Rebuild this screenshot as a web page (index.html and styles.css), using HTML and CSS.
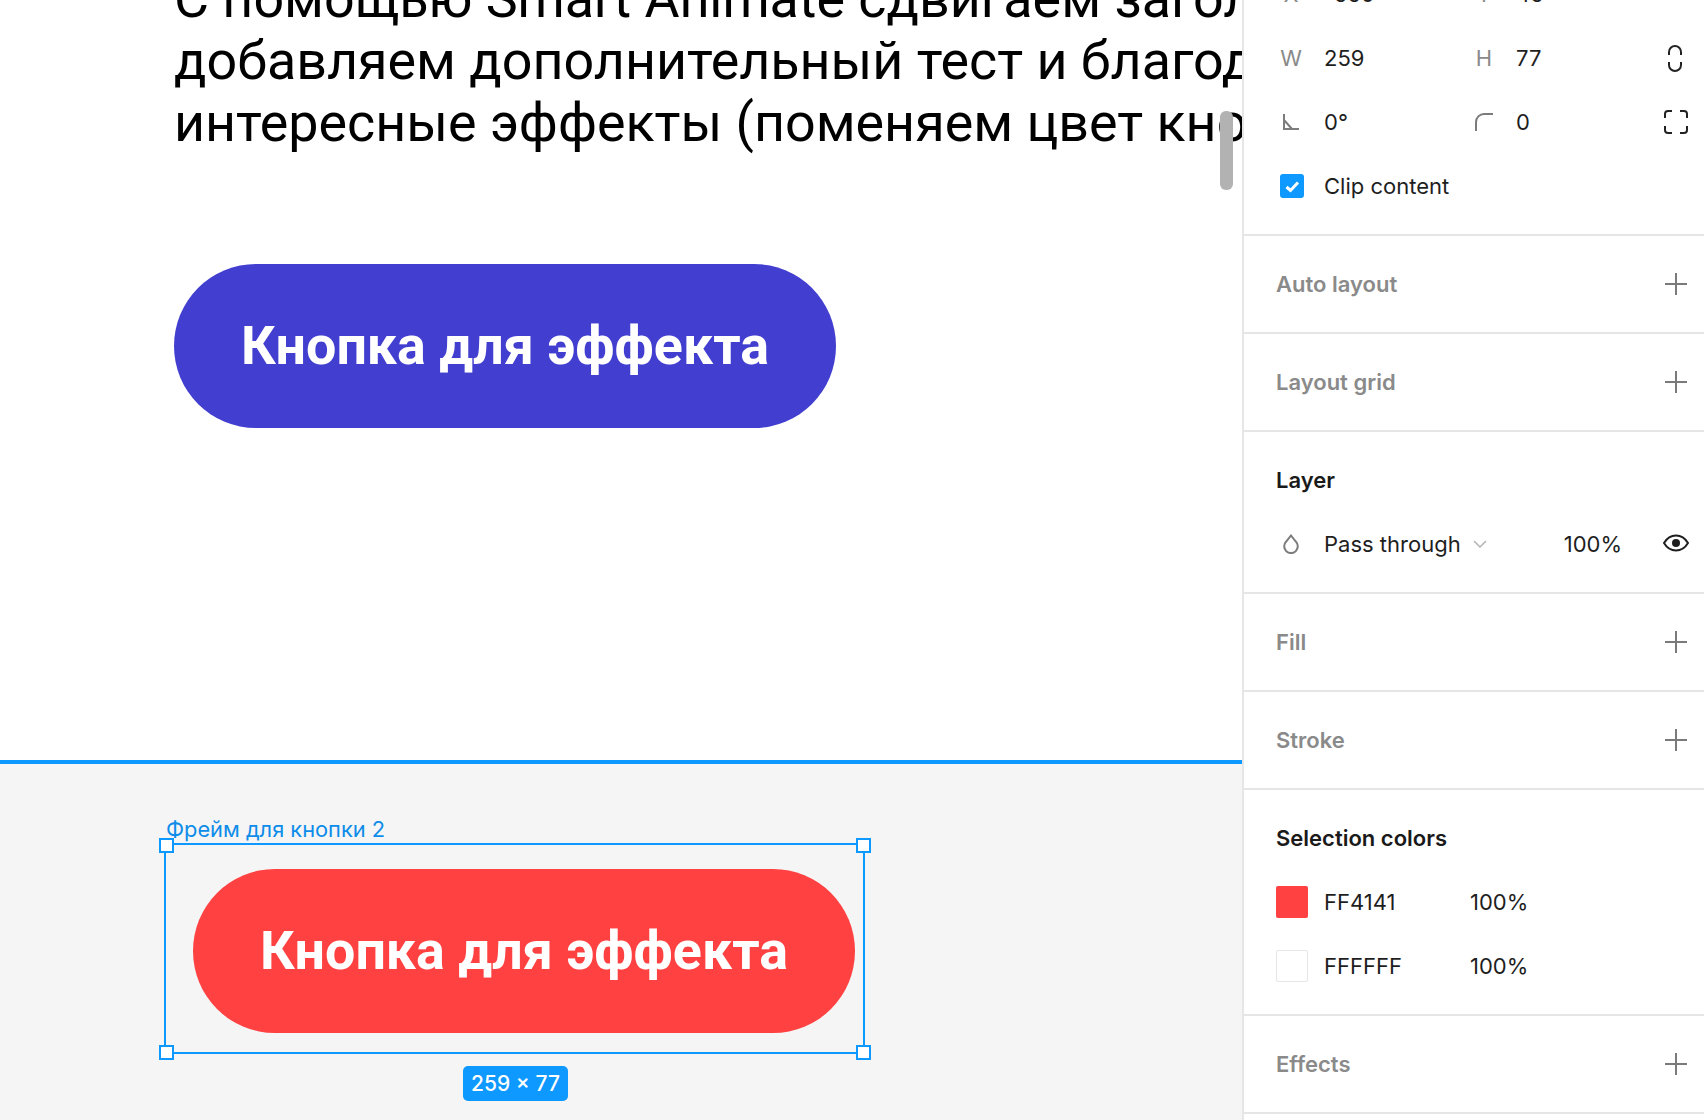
FILE: index.html
```html
<!DOCTYPE html>
<html lang="en">
<head>
    <meta charset="UTF-8">
    <meta name="viewport" content="width=device-width, initial-scale=1.0">
    <title>Smart Animate</title>
    <link rel="stylesheet" href="styles.css">
</head>
<body>

<div class="app">
    <div class="canvas">
        <div class="artboard">
            <p class="lead">
                <span>С помощью Smart Animate сдвигаем заголовок,</span>
                <span>добавляем дополнительный тест и благодаря этому</span>
                <span>интересные эффекты (поменяем цвет кнопки)</span>
            </p>
            <div class="btn btn-blue">Кнопка для эффекта</div>
        </div>
        <div class="workspace">
            <div class="frame-label">Фрейм для кнопки 2</div>
            <div class="frame">
                <i class="handle tl"></i><i class="handle tr"></i>
                <i class="handle bl"></i><i class="handle br"></i>
                <div class="btn btn-red">Кнопка для эффекта</div>
            </div>
            <div class="size-badge">259 × 77</div>
        </div>
        <div class="scrollbar"></div>
    </div>

    <!-- Right panel -->
    <aside class="panel">
        <section class="sec sec-frame">
            <div class="row">
                <span class="key">X</span><span class="val val-a">-550</span>
                <span class="key">Y</span><span class="val">45</span>
            </div>
            <div class="row">
                <span class="key">W</span><span class="val val-a">259</span>
                <span class="key">H</span><span class="val">77</span>
                <svg class="tool tool-link" viewBox="0 0 14 27"><path d="M1 10V7a6 6 0 0 1 12 0v3M1 17v3a6 6 0 0 0 12 0v-3"/></svg>
            </div>
            <div class="row">
                <span class="key"><svg class="ico ico-angle" viewBox="0 0 16 16"><path d="M1 0v15h15M1 6l8 9"/></svg></span><span class="val val-a">0°</span>
                <span class="key"><svg class="ico ico-corner" viewBox="0 0 18 18"><path d="M1 18V9a8 8 0 0 1 8-8h9"/></svg></span><span class="val">0</span>
                <svg class="tool tool-expand" viewBox="0 0 24 24"><path d="M1 8V4a3 3 0 0 1 3-3h4M16 1h4a3 3 0 0 1 3 3v4M23 16v4a3 3 0 0 1-3 3h-4M8 23H4a3 3 0 0 1-3-3v-4"/></svg>
            </div>
            <div class="row">
                <span class="check"><svg viewBox="0 0 24 24"><path d="M6.500 13l4 3.500 7.500-8"/></svg></span>
                <span class="val">Clip content</span>
            </div>
        </section>

        <section class="sec sec-empty">
            <h3>Auto layout</h3>
            <svg class="plus" viewBox="0 0 22 22"><path d="M11 0v22M0 11h22"/></svg>
        </section>
        <section class="sec sec-empty">
            <h3>Layout grid</h3>
            <svg class="plus" viewBox="0 0 22 22"><path d="M11 0v22M0 11h22"/></svg>
        </section>

        <section class="sec sec-layer">
            <h3 class="dark">Layer</h3>
            <div class="row">
                <span class="key"><svg class="ico ico-drop" viewBox="0 0 16 20"><path d="M8 1.500l4.800 6a6.800 6.800 0 1 1-9.600 0z"/></svg></span>
                <span class="val">Pass through</span>
                <svg class="chev" viewBox="0 0 14 10"><path d="M1 2l6 6 6-6"/></svg>
                <span class="val pct">100%</span>
                <svg class="eye" viewBox="0 0 26 18"><path d="M1 9c3-5 7-7.500 12-7.500S22 4 25 9c-3 5-7 7.500-12 7.500S4 14 1 9z"/><circle cx="13" cy="9" r="4"/></svg>
            </div>
        </section>

        <section class="sec sec-empty">
            <h3>Fill</h3>
            <svg class="plus" viewBox="0 0 22 22"><path d="M11 0v22M0 11h22"/></svg>
        </section>
        <section class="sec sec-empty">
            <h3>Stroke</h3>
            <svg class="plus" viewBox="0 0 22 22"><path d="M11 0v22M0 11h22"/></svg>
        </section>

        <section class="sec sec-colors">
            <h3 class="dark">Selection colors</h3>
            <div class="row">
                <span class="swatch swatch-red"></span>
                <span class="val hex">FF4141</span><span class="val">100%</span>
            </div>
            <div class="row">
                <span class="swatch"></span>
                <span class="val hex">FFFFFF</span><span class="val">100%</span>
            </div>
        </section>

        <section class="sec sec-empty">
            <h3>Effects</h3>
            <svg class="plus" viewBox="0 0 22 22"><path d="M11 0v22M0 11h22"/></svg>
        </section>
    </aside>
</div>

</body>
</html>
```
FILE: styles.css
```css
html, body {
    margin: 0;
    height: 100%;
    overflow: hidden;
}
body {
    font-family: Inter, sans-serif;
    background-color: #ffffff;
}
.app {
    display: flex;
    width: 1704px;
    height: 1120px;
}

/* Canvas */
.canvas {
    position: relative;
    width: 1242px;
    height: 1120px;
    overflow: hidden;
    display: flex;
    flex-direction: column;
}
.artboard {
    height: 760px;
    flex: none;
    padding-left: 174px;
    border-bottom: 4px solid #0d99ff;
    background-color: #ffffff;
}
.lead {
    margin: -32px 0 0;
    font-family: Roboto, sans-serif;
    font-size: 53.8px;
    line-height: 62px;
    color: #000000;
    white-space: nowrap;
}
.lead span {
    display: block;
}
.btn {
    width: 662px;
    height: 164px;
    box-sizing: border-box;
    padding-bottom: 2px;
    border-radius: 82px;
    display: flex;
    align-items: center;
    justify-content: center;
    font-family: Roboto, sans-serif;
    font-weight: 700;
    font-size: 53.8px;
    color: #ffffff;
}
.btn-blue {
    margin-top: 110px;
    background-color: #423ed0;
}
.btn-red {
    background-color: #ff4141;
}
.workspace {
    flex: 1;
    background-color: #f5f5f5;
    padding: 52px 0 0 164px;
}
.frame-label {
    height: 27px;
    padding-left: 2px;
    font-size: 21.8px;
    line-height: 27px;
    color: #0d8ce9;
}
.frame {
    position: relative;
    width: 701px;
    height: 211px;
    border: 2px solid #0d99ff;
    padding: 24px 0 0 27px;
    box-sizing: border-box;
}
.handle {
    position: absolute;
    width: 11px;
    height: 11px;
    background-color: #ffffff;
    border: 2px solid #0d99ff;
}
.handle.tl { left: -7px; top: -7px; }
.handle.tr { right: -8px; top: -7px; }
.handle.bl { left: -7px; bottom: -8px; }
.handle.br { right: -8px; bottom: -8px; }
.size-badge {
    width: 105px;
    height: 35px;
    margin: 12px 0 0 299px;
    border-radius: 5px;
    background-color: #0d99ff;
    color: #ffffff;
    font-size: 21px;
    font-weight: 500;
    line-height: 35px;
    text-align: center;
}
.scrollbar {
    position: absolute;
    left: 1220px;
    top: 111px;
    width: 13px;
    height: 79px;
    border-radius: 6px;
    background-color: #b2b2b2;
}

/* Right panel */
.panel {
    width: 462px;
    height: 1120px;
    box-sizing: border-box;
    border-left: 2px solid #e6e6e6;
    overflow: hidden;
    font-size: 22px;
    color: #1e1e1e;
}
.sec {
    box-sizing: border-box;
    border-bottom: 2px solid #e6e6e6;
    padding-left: 32px;
}
.sec h3 {
    margin: 0;
    font-size: 22px;
    font-weight: 600;
    line-height: 26px;
    color: #8a8a8a;
}
.sec h3.dark {
    color: #1a1a1a;
}
.row {
    display: flex;
    align-items: center;
    height: 64px;
}
.sec-frame {
    margin-top: -38px;
    height: 274px;
}
.key {
    width: 30px;
    margin-right: 18px;
    color: #8a8a8a;
    display: flex;
    align-items: center;
    justify-content: center;
}
.val {
    white-space: nowrap;
}
.val-a {
    width: 145px;
}
.val-a + .key {
    margin-right: 17px;
}
.ico {
    fill: none;
    stroke: #7c7c7c;
    stroke-width: 2;
}
.ico-angle {
    width: 16px;
    height: 16px;
}
.ico-corner {
    width: 18px;
    height: 18px;
}
.ico-drop {
    width: 16px;
    height: 20px;
}
.tool {
    margin-left: auto;
    fill: none;
    stroke: #222222;
    stroke-width: 2;
}
.tool-link {
    width: 14px;
    height: 27px;
    margin-right: 22px;
}
.tool-expand {
    width: 24px;
    height: 24px;
    margin-right: 16px;
}
.check {
    width: 24px;
    height: 24px;
    margin: 0 20px 0 4px;
    border-radius: 3px;
    background-color: #0d99ff;
}
.check svg {
    display: block;
    fill: none;
    stroke: #ffffff;
    stroke-width: 3;
}
.sec-empty {
    height: 98px;
    display: flex;
    align-items: center;
    justify-content: space-between;
    padding-right: 17px;
}
.plus {
    width: 22px;
    height: 22px;
    fill: none;
    stroke: #7a7a7a;
    stroke-width: 2;
}
.sec-layer {
    height: 162px;
    padding-top: 35px;
}
.sec-layer .row {
    margin-top: 19px;
}
.chev {
    width: 14px;
    height: 10px;
    margin-left: 12px;
    fill: none;
    stroke: #b3b3b3;
    stroke-width: 1.500;
}
.pct {
    margin-left: auto;
}
.eye {
    width: 26px;
    height: 18px;
    margin: -2px 15px 0 41px;
    fill: none;
    stroke: #1e1e1e;
    stroke-width: 2;
}
.eye circle {
    fill: #1e1e1e;
    stroke: none;
}
.sec-colors {
    height: 226px;
    padding-top: 35px;
}
.sec-colors h3 {
    margin-bottom: 19px;
}
.swatch {
    width: 32px;
    height: 32px;
    margin-right: 16px;
    box-sizing: border-box;
    border: 1px solid #e6e6e6;
    border-radius: 2px;
}
.swatch-red {
    border: none;
    background-color: #ff4141;
}
.hex {
    width: 146px;
}
```
